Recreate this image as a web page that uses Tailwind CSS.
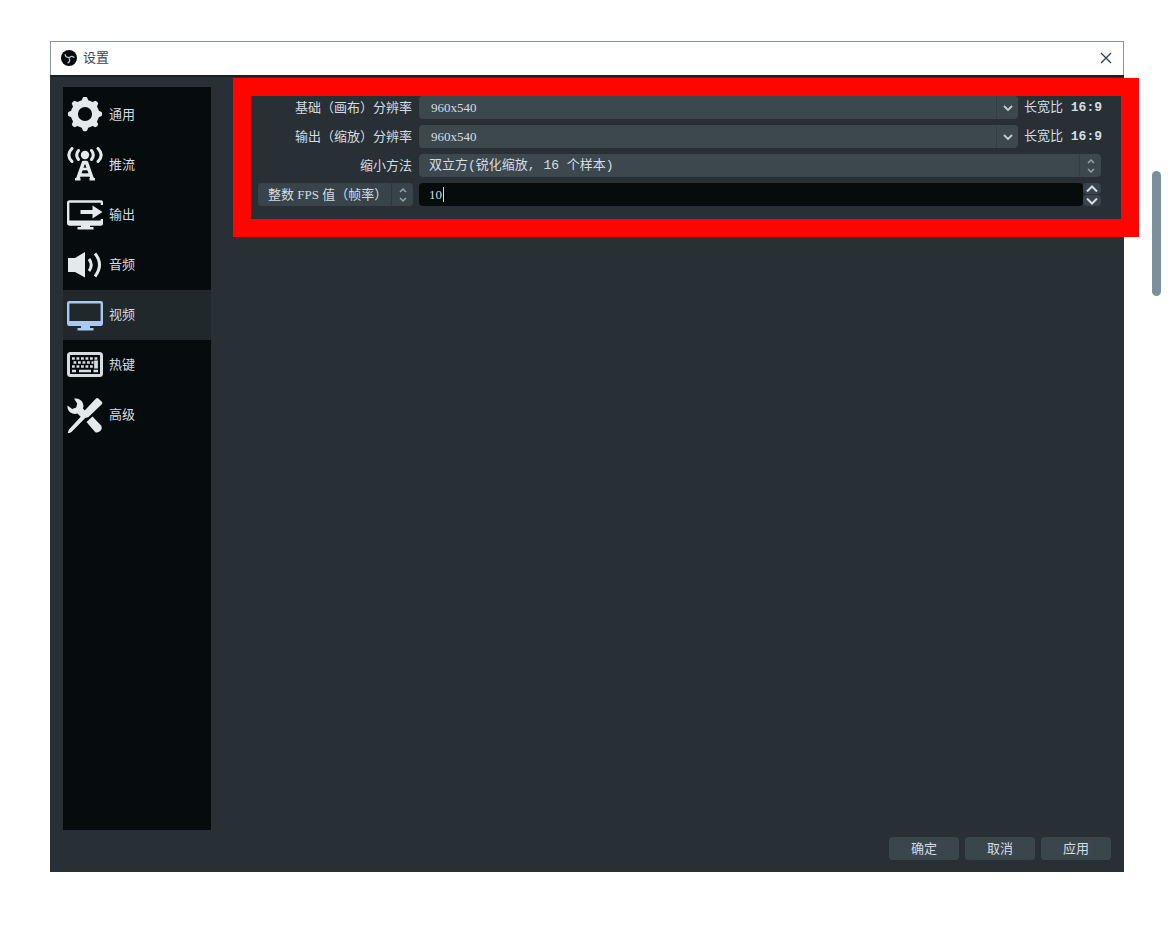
<!DOCTYPE html>
<html lang="zh-CN">
<head>
    <meta charset="UTF-8">
    <meta name="viewport" content="width=device-width, initial-scale=1.0">
    <title>设置</title>
    <script src="https://cdn.jsdelivr.net/npm/@tailwindcss/browser@4"></script>
</head>
<body class="bg-white font-['Liberation_Serif','Noto_Sans_CJK_SC',serif] text-[13px] leading-5 text-[#d3dde3]">
    <div class="relative flex min-h-screen pt-[41px] pb-[77px] pl-[50px] pr-[44px]">
        <div class="flex flex-1 flex-col bg-[#283035]">
            <!-- Title bar -->
            <header class="flex h-[34px] items-center border border-b-0 border-[#8796a3] bg-white pb-0.5 pl-2.5 pr-[11px] text-[#3c444c]">
                <svg class="h-4 w-4" viewBox="0 0 16 16" aria-hidden="true">
                    <circle cx="8" cy="8" r="8" fill="#06090c"/>
                    <g fill="none" stroke="#b9c3ca" stroke-width="1.3" stroke-linecap="round">
                        <path d="M4.2 4.6c.2 2 1.6 3 3.4 2.8"/>
                        <path d="M12.8 7.2c-1.5-1.3-3.3-1-4.2.5"/>
                        <path d="M7 12.8c1.7-.8 2.2-2.6 1.2-4.2"/>
                    </g>
                </svg>
                <h1 class="ml-1.5 flex-1">设置</h1>
                <button type="button" aria-label="关闭">
                    <svg class="h-3 w-3" viewBox="0 0 12 12" fill="none" stroke="#33424e" stroke-width="1.4"><path d="M1 1l10 10M11 1L1 11"/></svg>
                </button>
            </header>

            <div class="flex flex-1 flex-col border-t-2 border-[#1a2024] pt-2.5 pb-3 pl-[13px] pr-[13px]">
                <div class="flex flex-1">
                    <!-- Sidebar -->
                    <nav class="w-[148px] shrink-0 bg-[#060b0d] pt-[3px]">
                        <a href="#" class="flex h-[50px] items-center gap-1.5 pl-1">
                            <svg class="h-9 w-9" viewBox="0 0 36 36" aria-hidden="true">
                                <circle cx="18" cy="17" r="10.6" fill="none" stroke="#e4e9ec" stroke-width="7"/>
                                <g fill="#e4e9ec">
                                    <path id="tooth" d="M13.8 5.500l2.200-5.200q2-1 4 0l2.200 5.200z"/>
                                    <use href="#tooth" transform="rotate(45 18 17)"/>
                                    <use href="#tooth" transform="rotate(90 18 17)"/>
                                    <use href="#tooth" transform="rotate(135 18 17)"/>
                                    <use href="#tooth" transform="rotate(180 18 17)"/>
                                    <use href="#tooth" transform="rotate(225 18 17)"/>
                                    <use href="#tooth" transform="rotate(270 18 17)"/>
                                    <use href="#tooth" transform="rotate(315 18 17)"/>
                                </g>
                            </svg>
                            通用
                        </a>
                        <a href="#" class="flex h-[50px] items-center gap-1.5 pl-1">
                            <svg class="h-9 w-9" viewBox="0 0 36 36" fill="none" stroke="#e4e9ec" aria-hidden="true">
                                <circle cx="18" cy="8" r="4.200" fill="#e4e9ec" stroke="none"/>
                                <path stroke-width="3" stroke-linecap="round" d="M11.500 3.500q-3.600 4.500 0 9M24.500 3.500q3.600 4.500 0 9M5 1.500q-6.400 6.500 0 13M31 1.500q6.400 6.500 0 13"/>
                                <path stroke-width="3.600" stroke-linejoin="round" d="M10.500 32.500L16.500 15.500h3l6 17"/>
                                <path stroke-width="2.600" d="M15 22h6"/>
                                <path stroke-width="3.400" d="M12.500 28h11"/>
                                <path stroke-width="2.400" d="M8 32.300h5.500M22.500 32.300H28"/>
                            </svg>
                            推流
                        </a>
                        <a href="#" class="flex h-[50px] items-center gap-1.5 pl-1">
                            <svg class="h-9 w-9" viewBox="0 0 36 36" aria-hidden="true">
                                <path d="M35 8V6q0-1.500-1.500-1.500h-31Q1.200 4.500 1.200 6v20q0 1.500 1.500 1.500h31Q35 27.500 35 26v-4" fill="none" stroke="#e4e9ec" stroke-width="2.400"/>
                                <path d="M1 23.500h34V27H1zM14 27h9v3h3.500v2.500H10.500V30H14zM13.500 13h12V8.500l10 6.500-10 6.500V17h-12z" fill="#e4e9ec"/>
                            </svg>
                            输出
                        </a>
                        <a href="#" class="flex h-[50px] items-center gap-1.5 pl-1">
                            <svg class="h-9 w-9" viewBox="0 0 36 36" aria-hidden="true">
                                <path d="M1 11h7L18 5v25.500L8 25H1z" fill="#e4e9ec"/>
                                <path d="M22 12q4.500 6 0 12M28 6.500q9 11 0 23" fill="none" stroke="#e4e9ec" stroke-width="3"/>
                            </svg>
                            音频
                        </a>
                        <a href="#" aria-current="page" class="flex h-[50px] items-center gap-1.5 bg-[#20282c] pl-1">
                            <svg class="h-9 w-9" viewBox="0 0 36 36" aria-hidden="true">
                                <rect x="1.200" y="5.200" width="33.600" height="22.600" rx="1" fill="none" stroke="#abc8f2" stroke-width="2.400"/>
                                <path d="M1 24h34v4H1zM14 28h9v3h3.500v2.500H10.500V31H14z" fill="#abc8f2"/>
                            </svg>
                            视频
                        </a>
                        <a href="#" class="flex h-[50px] items-center gap-1.5 pl-1">
                            <svg class="h-9 w-9" viewBox="0 0 36 36" aria-hidden="true">
                                <rect x="1.500" y="6.500" width="33" height="22" rx="2" fill="none" stroke="#d6dde1" stroke-width="3"/>
                                <g fill="none" stroke="#d6dde1">
                                    <path stroke-width="2.400" stroke-dasharray="2.800 1.700" d="M5 11.500h26"/>
                                    <path stroke-width="2.400" stroke-dasharray="2.800 1.700" d="M6.500 15.500h20"/>
                                    <path stroke-width="2.400" stroke-dasharray="2.800 1.700" d="M5 19.500h22"/>
                                    <path stroke-width="2.600" d="M5 24h4M12 24h12M26.500 24h4.500"/>
                                    <path stroke-width="3.800" d="M29 13.500v8"/>
                                </g>
                            </svg>
                            热键
                        </a>
                        <a href="#" class="flex h-[50px] items-center gap-1.5 pl-1">
                            <svg class="h-9 w-9" viewBox="0 0 36 36" aria-hidden="true">
                                <path d="M7 1.500q6.500-.8 8.800 4.500 1.200 2.800.2 5.500l4 4.500-5 5-4.500-4.500q-4 1.200-7-1Q0 13 .5 8.500l4.700 3.500 4-1.500 1-4z" fill="#e4e9ec"/>
                                <path d="M19.500 25L25.500 19.500l9 9.500q1 3-1.200 5t-5 1.200z" fill="#e4e9ec"/>
                                <path d="M29 1.500q1.200-1 2.400 0l3.400 3.300q1 1.200 0 2.400L21.500 20q-1.500 1-3 .8L4.500 35 1.500 36.500.8 35.500 2 32.500 14.800 18.500q0-1.500 1-3z" fill="#e4e9ec"/>
                            </svg>
                            高级
                        </a>
                    </nav>

                    <!-- Video settings -->
                    <main class="flex-1 pt-[9px] pl-[47px] pr-2.5">
                        <form class="relative grid grid-cols-[155px_1fr] gap-x-1.5 gap-y-1.5">
                            <label for="base-res" class="flex h-[23px] items-center justify-end pr-px whitespace-nowrap">基础（画布）分辨率</label>
                            <div class="flex items-center gap-1.5">
                                <div class="relative flex-1">
                                    <select id="base-res" class="block h-[23px] w-full appearance-none rounded-sm bg-[#3d484e] pl-3">
                                        <option>960x540</option>
                                    </select>
                                    <span class="pointer-events-none absolute inset-y-0 right-0 flex w-[22px] items-center justify-center border-l border-[#333d43]">
                                        <svg class="h-2 w-2.5" viewBox="0 0 10 8" fill="none" stroke="#c3cdd3" stroke-width="1.8"><path d="M1 2l4 4 4-4"/></svg>
                                    </span>
                                </div>
                                <span class="w-[77px] whitespace-nowrap font-['Liberation_Mono','Noto_Sans_CJK_SC',monospace]">长宽比 <b>16:9</b></span>
                            </div>

                            <label for="out-res" class="flex h-[23px] items-center justify-end pr-px whitespace-nowrap">输出（缩放）分辨率</label>
                            <div class="flex items-center gap-1.5">
                                <div class="relative flex-1">
                                    <select id="out-res" class="block h-[23px] w-full appearance-none rounded-sm bg-[#3d484e] pl-3">
                                        <option>960x540</option>
                                    </select>
                                    <span class="pointer-events-none absolute inset-y-0 right-0 flex w-[22px] items-center justify-center border-l border-[#333d43]">
                                        <svg class="h-2 w-2.5" viewBox="0 0 10 8" fill="none" stroke="#c3cdd3" stroke-width="1.8"><path d="M1 2l4 4 4-4"/></svg>
                                    </span>
                                </div>
                                <span class="w-[77px] whitespace-nowrap font-['Liberation_Mono','Noto_Sans_CJK_SC',monospace]">长宽比 <b>16:9</b></span>
                            </div>

                            <label for="filter" class="flex h-[23px] items-center justify-end pr-px whitespace-nowrap">缩小方法</label>
                            <div class="relative">
                                <select id="filter" class="block h-[23px] w-full appearance-none rounded-sm bg-[#3d484e] pl-2.5 font-['Liberation_Mono','Noto_Sans_CJK_SC',monospace]">
                                    <option>双立方(锐化缩放, 16 个样本)</option>
                                </select>
                                <span class="pointer-events-none absolute inset-y-0 right-0 flex w-[22px] items-center justify-center border-l border-[#333d43]">
                                    <svg class="h-4 w-2" viewBox="0 0 8 16" fill="none" stroke="#96a3ab" stroke-width="1.5"><path d="M1 5l3-3 3 3M1 11l3 3 3-3"/></svg>
                                </span>
                            </div>

                            <div class="relative">
                                <select aria-label="FPS 类型" class="block h-[23px] w-full appearance-none rounded-sm bg-[#39444a] pl-2.5">
                                    <option>整数 FPS 值（帧率）</option>
                                </select>
                                <span class="pointer-events-none absolute inset-y-0 right-0 flex w-[22px] items-center justify-center border-l border-[#2f383d]">
                                    <svg class="h-4 w-2" viewBox="0 0 8 16" fill="none" stroke="#96a3ab" stroke-width="1.5"><path d="M1 5l3-3 3 3M1 11l3 3 3-3"/></svg>
                                </span>
                            </div>
                            <div class="relative flex">
                                <input type="text" inputmode="numeric" aria-label="FPS" value="10" class="h-[23px] min-w-0 flex-1 rounded-sm bg-[#060b0d] pl-2.5 outline-none">
                                <span class="absolute top-1 left-6 h-[15px] w-px bg-[#d3dde3]"></span>
                                <div class="flex w-[18px] flex-col gap-px">
                                    <button type="button" aria-label="增加" class="flex h-[11px] items-center justify-center rounded-sm bg-[#39444a]">
                                        <svg class="h-2 w-3" viewBox="0 0 12 8" fill="none" stroke="#d3dde3" stroke-width="2"><path d="M1 6.500l5-5 5 5"/></svg>
                                    </button>
                                    <button type="button" aria-label="减少" class="flex h-[11px] items-center justify-center rounded-sm bg-[#39444a]">
                                        <svg class="h-2 w-3" viewBox="0 0 12 8" fill="none" stroke="#d3dde3" stroke-width="2"><path d="M1 1.500l5 5 5-5"/></svg>
                                    </button>
                                </div>
                            </div>

                            <!-- Highlight frame over the form -->
                            <div class="pointer-events-none absolute -top-[18px] -right-[38px] -bottom-[31px] -left-[25px] border-[18px] border-[#ff0500]"></div>
                        </form>
                    </main>
                </div>

                <!-- Dialog buttons -->
                <footer class="flex justify-end gap-1.5 pt-[7px]">
                    <button type="button" class="h-[23px] w-[70px] rounded-sm bg-[#3b464c]">确定</button>
                    <button type="button" class="h-[23px] w-[70px] rounded-sm bg-[#3b464c]">取消</button>
                    <button type="button" class="h-[23px] w-[70px] rounded-sm bg-[#3b464c]">应用</button>
                </footer>
            </div>
        </div>

        <!-- Page scroll thumb -->
        <div class="absolute top-[171px] right-[7px] h-[125px] w-[9px] rounded-full bg-[#7b8f9d]"></div>
    </div>
</body>
</html>
